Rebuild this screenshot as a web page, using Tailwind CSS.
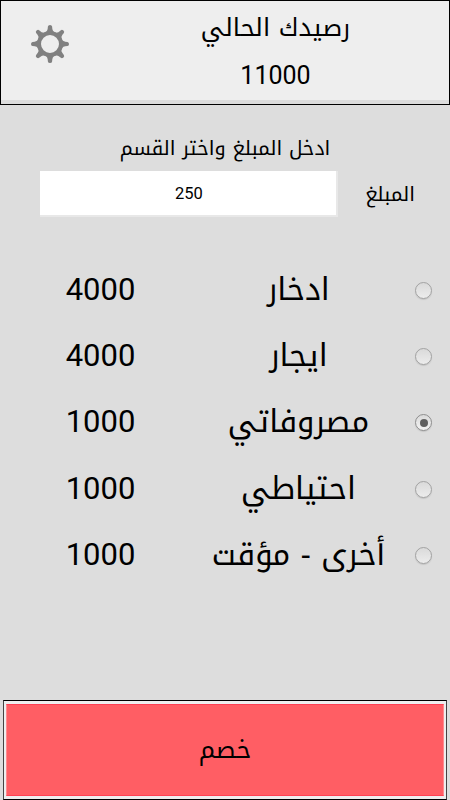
<!DOCTYPE html>
<html lang="ar">
<head>
    <meta charset="UTF-8">
    <meta name="viewport" content="width=device-width, initial-scale=1.0">
    <title>رصيدك الحالي</title>
    <script src="https://cdn.jsdelivr.net/npm/@tailwindcss/browser@4"></script>
</head>
<body class="h-screen overflow-hidden bg-[#dddddd] text-black flex flex-col font-['Noto_Kufi_Arabic','Noto_Sans',sans-serif]">

    <!-- Header -->
    <header class="h-[105px] shrink-0 border border-black bg-[#eeeeee] flex shadow-[inset_0_-4px_0_#dcdcdc]">
        <button class="w-[98px] pt-6 flex justify-center items-start" aria-label="settings">
            <svg class="size-[38px]" viewBox="-19 -19 38 38" fill="none" stroke="#808080">
                <circle r="11" stroke-width="4"/>
                <g fill="#808080" stroke="none">
                    <g id="pair">
                        <path id="tooth" d="M-5-11.5Q-2.2-12.5-2.1-17.5Q-1.9-19 0-19Q1.9-19 2.1-17.5Q2.2-12.5 5-11.5Z"/>
                        <use href="#tooth" transform="rotate(45)"/>
                    </g>
                    <use href="#pair" transform="rotate(90)"/>
                    <use href="#pair" transform="rotate(180)"/>
                    <use href="#pair" transform="rotate(270)"/>
                </g>
            </svg>
        </button>
        <div class="flex-1 flex flex-col items-center pl-[3px]">
            <h1 class="mt-[5px] h-[44px] leading-[44px] text-[25px]" dir="rtl">رصيدك الحالي</h1>
            <p class="mt-[11px] leading-[30px] text-[25px] font-[Roboto]">11000</p>
        </div>
    </header>

    <!-- Amount -->
    <main class="flex-1 flex flex-col">
        <p class="mt-[25px] h-[36px] leading-[36px] text-[19.9px] text-center" dir="rtl">ادخل المبلغ واختر القسم</p>
        <div class="mt-[5px] flex items-center" dir="rtl">
            <label for="amount" class="w-[112px] pr-[35px] text-[19.9px] leading-[36px]">المبلغ</label>
            <input id="amount" type="text" value="250" class="w-[298px] h-[46px] pl-[2px] bg-white border-r-2 border-b-2 border-[#e8e8e8] text-center text-[16.5px] font-[Roboto]">
        </div>

        <!-- Categories -->
        <ul class="mt-[39px] text-[31px]">
            <li class="h-[66.3px] grid grid-cols-[201px_195px_54px] items-center text-center">
                <span class="font-[Roboto] pt-[2px]">4000</span><span class="pt-[2px]" dir="rtl">ادخار</span>
                <i class="ml-[19px] mt-[2px] size-[17px] rounded-full border border-[#a2a2a2] bg-linear-to-b from-[#dadada] to-[#ececec] shadow-[0_1px_1px_#c4c4c4]"></i>
            </li>
            <li class="h-[66.3px] grid grid-cols-[201px_195px_54px] items-center text-center">
                <span class="font-[Roboto] pt-[2px]">4000</span><span class="pt-[2px]" dir="rtl">ايجار</span>
                <i class="ml-[19px] mt-[2px] size-[17px] rounded-full border border-[#a2a2a2] bg-linear-to-b from-[#dadada] to-[#ececec] shadow-[0_1px_1px_#c4c4c4]"></i>
            </li>
            <li class="h-[66.3px] grid grid-cols-[201px_195px_54px] items-center text-center">
                <span class="font-[Roboto] pt-[2px]">1000</span><span class="pt-[2px]" dir="rtl">مصروفاتي</span>
                <i class="ml-[19px] mt-[2px] size-[17px] rounded-full border border-[#8e8e8e] bg-linear-to-b from-[#dadada] to-[#f4f4f4] shadow-[0_1px_1px_#c4c4c4] flex items-center justify-center"><b class="size-2 rounded-full bg-[#606060]"></b></i>
            </li>
            <li class="h-[66.3px] grid grid-cols-[201px_195px_54px] items-center text-center">
                <span class="font-[Roboto] pt-[2px]">1000</span><span class="pt-[2px]" dir="rtl">احتياطي</span>
                <i class="ml-[19px] mt-[2px] size-[17px] rounded-full border border-[#a2a2a2] bg-linear-to-b from-[#dadada] to-[#ececec] shadow-[0_1px_1px_#c4c4c4]"></i>
            </li>
            <li class="h-[66.3px] grid grid-cols-[201px_195px_54px] items-center text-center">
                <span class="font-[Roboto] pt-[2px]">1000</span><span class="pt-[2px]" dir="rtl">أخرى - مؤقت</span>
                <i class="ml-[19px] mt-[2px] size-[17px] rounded-full border border-[#a2a2a2] bg-linear-to-b from-[#dadada] to-[#ececec] shadow-[0_1px_1px_#c4c4c4]"></i>
            </li>
        </ul>
    </main>

    <!-- Submit -->
    <footer class="h-[100px] shrink-0 mx-[3px] border border-y-black border-x-[#444444] bg-[#eeeeee] py-[3px] px-[2px]">
        <button class="size-full border-y border-y-[#ff4053] border-x border-x-[#ff8a8e] bg-[#ff5e64] text-[25px]" dir="rtl">خصم</button>
    </footer>

</body>
</html>
